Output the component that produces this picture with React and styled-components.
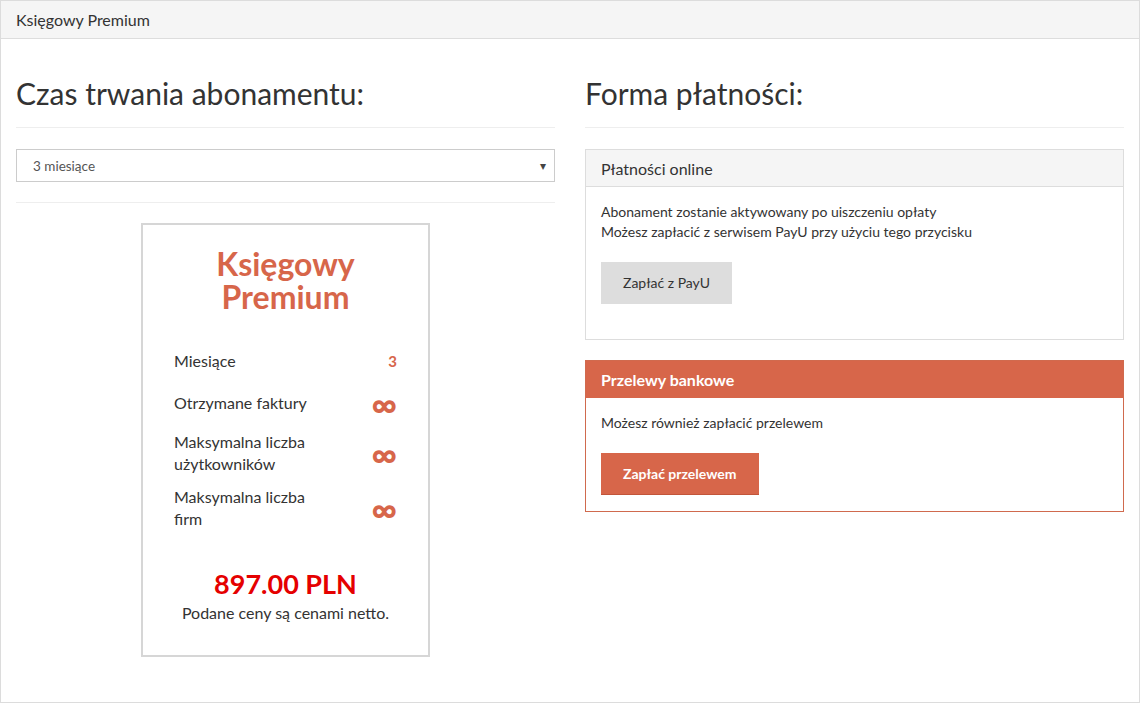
import styled, { createGlobalStyle } from 'styled-components';

const GlobalStyle = createGlobalStyle`
  html, body {
    margin: 0;
    padding: 0;
    background: #fff;
  }
  body {
    font-family: Lato, "Open Sans", "Liberation Sans", sans-serif;
    color: #333;
  }
  * {
    box-sizing: border-box;
  }
`;

const ACCENT = '#d7664a';

// space = gap above the row
const features = [
  { label: 'Miesiące', value: '3', space: 0 },
  { label: 'Otrzymane faktury', value: '∞', infinite: true, space: 20 },
  { label: 'Maksymalna liczba użytkowników', value: '∞', infinite: true, space: 17 },
  { label: 'Maksymalna liczba firm', value: '∞', infinite: true, space: 11 },
];

const App = () => {
  return (
    <>
      <GlobalStyle />
      <Page>
        <PageHeader>Księgowy Premium</PageHeader>
        <Body>
          <Column>
            <Heading>Czas trwania abonamentu:</Heading>
            <Rule />
            <SelectBox>
              <span>3 miesiące</span>
              <Caret>▾</Caret>
            </SelectBox>
            <Rule $spaced />
            <PlanCard>
              <PlanTitle>
                Księgowy
                <br />
                Premium
              </PlanTitle>
              <FeatureList>
                {features.map((f) => (
                  <FeatureRow key={f.label} $space={f.space}>
                    <FeatureLabel>{f.label}</FeatureLabel>
                    <FeatureValue $infinite={f.infinite}>{f.value}</FeatureValue>
                  </FeatureRow>
                ))}
              </FeatureList>
              <Price>897.00 PLN</Price>
              <PriceNote>Podane ceny są cenami netto.</PriceNote>
            </PlanCard>
          </Column>
          <Column>
            <Heading>Forma płatności:</Heading>
            <Rule />
            <Panel>
              <PanelHeading>Płatności online</PanelHeading>
              <PanelBody $extra>
                <Text>
                  Abonament zostanie aktywowany po uiszczeniu opłaty
                  <br />
                  Możesz zapłacić z serwisem PayU przy użyciu tego przycisku
                </Text>
                <Button>Zapłać z PayU</Button>
              </PanelBody>
            </Panel>
            <Panel $accent>
              <PanelHeading $accent>Przelewy bankowe</PanelHeading>
              <PanelBody>
                <Text>Możesz również zapłacić przelewem</Text>
                <Button $accent>Zapłać przelewem</Button>
              </PanelBody>
            </Panel>
          </Column>
        </Body>
      </Page>
    </>
  );
};

const Page = styled.div`
  width: 1140px;
  height: 703px;
  border: 1px solid #dcdcdc;
  background: #fff;
  overflow: hidden;
`;

const PageHeader = styled.div`
  height: 38px;
  padding: 0 15px;
  display: flex;
  align-items: center;
  background: #f5f5f5;
  border-bottom: 1px solid #ddd;
  font-size: 16px;
  color: #333;
`;

const Body = styled.div`
  display: grid;
  grid-template-columns: 1fr 1fr;
  column-gap: 30px;
  padding: 0 15px;
`;

const Column = styled.div`
  display: flex;
  flex-direction: column;
  min-width: 0;
`;

const Heading = styled.h2`
  margin: 34px 0 0;
  font-size: 30px;
  font-weight: 400;
  line-height: 40px;
  color: #333;
`;

const Rule = styled.hr`
  width: 100%;
  border: 0;
  border-top: 1px solid #eee;
  margin: ${(p) => (p.$spaced ? '20px 0 20px' : '14px 0 21px')};
`;

const SelectBox = styled.div`
  height: 33px;
  border: 1px solid #ccc;
  padding: 0 8px 0 16px;
  display: flex;
  align-items: center;
  justify-content: space-between;
  font-size: 13.5px;
  color: #555;
`;

const Caret = styled.span`
  font-size: 12px;
  color: #444;
`;

const PlanCard = styled.div`
  align-self: center;
  width: 289px;
  height: 434px;
  border: 2px solid #d6d6d6;
  padding: 22px 31px 0;
  display: flex;
  flex-direction: column;
  align-items: center;
`;

const PlanTitle = styled.div`
  font-size: 32px;
  font-weight: 700;
  line-height: 33px;
  color: ${ACCENT};
  text-align: center;
  margin-bottom: 37px;
`;

const FeatureList = styled.div`
  width: 100%;
  display: flex;
  flex-direction: column;
`;

const FeatureRow = styled.div`
  display: flex;
  align-items: center;
  justify-content: space-between;
  margin-top: ${(p) => p.$space}px;
`;

const FeatureLabel = styled.div`
  max-width: 150px;
  font-size: 16px;
  line-height: 22px;
  color: #333;
`;

const FeatureValue = styled.div`
  color: ${ACCENT};
  font-weight: ${(p) => (p.$infinite ? 900 : 700)};
  font-size: ${(p) => (p.$infinite ? '35px' : '15px')};
  line-height: 22px;
`;

const Price = styled.div`
  margin-top: 37px;
  font-size: 27px;
  font-weight: 700;
  color: #e50000;
`;

const PriceNote = styled.div`
  margin-top: 3px;
  font-size: 16px;
  color: #333;
`;

const Panel = styled.div`
  border: 1px solid ${(p) => (p.$accent ? '#d06a4e' : '#ddd')};
  margin-bottom: 20px;
`;

const PanelHeading = styled.div`
  height: 37px;
  padding: 0 15px;
  display: flex;
  align-items: center;
  font-size: 16px;
  font-weight: ${(p) => (p.$accent ? 700 : 400)};
  color: ${(p) => (p.$accent ? '#fff' : '#333')};
  background: ${(p) => (p.$accent ? ACCENT : '#f5f5f5')};
  border-bottom: 1px solid ${(p) => (p.$accent ? ACCENT : '#ddd')};
`;

const PanelBody = styled.div`
  padding: 15px 15px ${(p) => (p.$extra ? '35px' : '16px')};
`;

const Text = styled.p`
  margin: 0 0 20px;
  font-size: 14px;
  line-height: 20px;
  color: #333;
`;

const Button = styled.button`
  display: block;
  height: 42px;
  padding: 0 22px;
  border: 0;
  border-radius: 0;
  font-family: inherit;
  font-size: 14px;
  font-weight: ${(p) => (p.$accent ? 700 : 400)};
  background: ${(p) => (p.$accent ? ACCENT : '#ddd')};
  color: ${(p) => (p.$accent ? '#fff' : '#333')};
  border-bottom: 1px solid ${(p) => (p.$accent ? '#c2553a' : '#ddd')};
`;

export default App;
